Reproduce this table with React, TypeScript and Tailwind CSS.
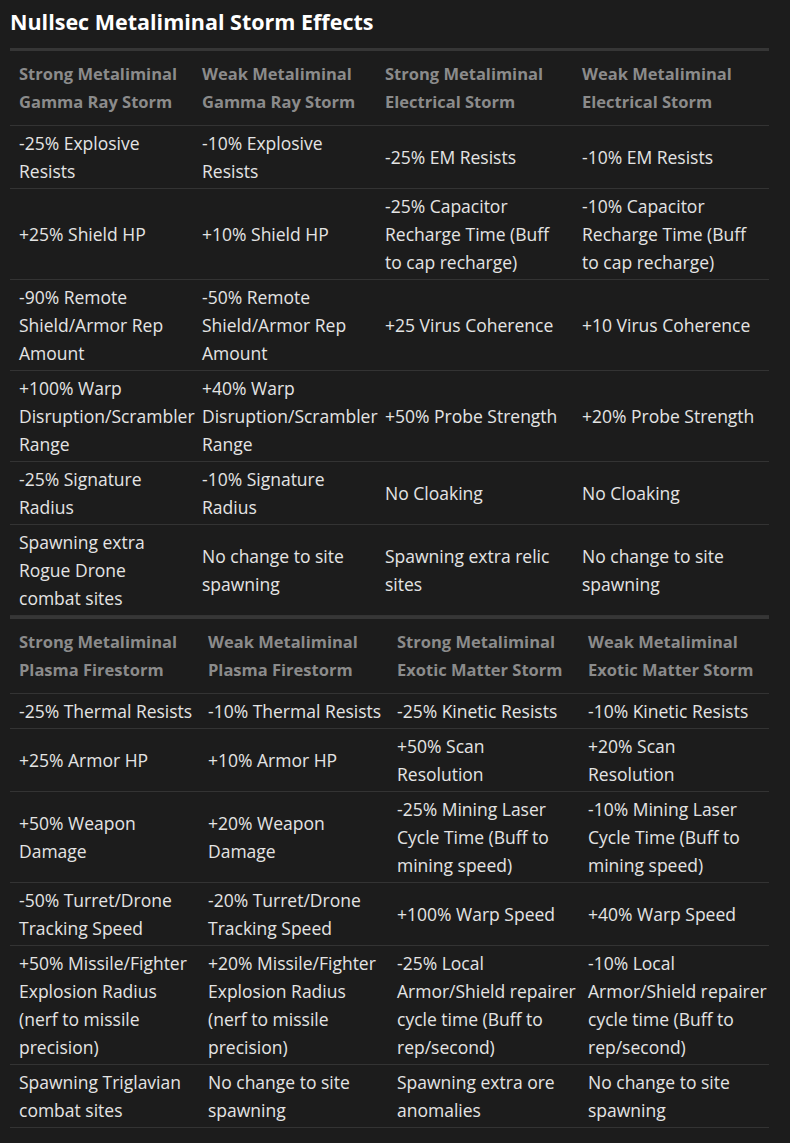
const tables = [
  {
    widths: [183, 183, 197, 196],
    heads: [
      "Strong Metaliminal Gamma Ray Storm",
      "Weak Metaliminal Gamma Ray Storm",
      "Strong Metaliminal Electrical Storm",
      "Weak Metaliminal Electrical Storm",
    ],
    rows: [
      ["-25% Explosive Resists", "-10% Explosive Resists", "-25% EM Resists", "-10% EM Resists"],
      [
        "+25% Shield HP",
        "+10% Shield HP",
        "-25% Capacitor Recharge Time (Buff\nto cap recharge)",
        "-10% Capacitor Recharge Time (Buff to cap recharge)",
      ],
      [
        "-90% Remote Shield/Armor Rep Amount",
        "-50% Remote Shield/Armor Rep Amount",
        "+25 Virus Coherence",
        "+10 Virus Coherence",
      ],
      [
        "+100% Warp Disruption/Scrambler Range",
        "+40% Warp Disruption/Scrambler Range",
        "+50% Probe Strength",
        "+20% Probe Strength",
      ],
      ["-25% Signature Radius", "-10% Signature Radius", "No Cloaking", "No Cloaking"],
      [
        "Spawning extra Rogue Drone combat sites",
        "No change to site spawning",
        "Spawning extra relic sites",
        "No change to site spawning",
      ],
    ],
  },
  {
    widths: [189, 189, 191, 190],
    heads: [
      "Strong Metaliminal Plasma Firestorm",
      "Weak Metaliminal Plasma Firestorm",
      "Strong Metaliminal Exotic Matter Storm",
      "Weak Metaliminal Exotic Matter Storm",
    ],
    rows: [
      ["-25% Thermal Resists", "-10% Thermal Resists", "-25% Kinetic Resists", "-10% Kinetic Resists"],
      ["+25% Armor HP", "+10% Armor HP", "+50% Scan\nResolution", "+20% Scan\nResolution"],
      [
        "+50% Weapon Damage",
        "+20% Weapon Damage",
        "-25% Mining Laser Cycle Time (Buff to mining speed)",
        "-10% Mining Laser Cycle Time (Buff to mining speed)",
      ],
      [
        "-50% Turret/Drone Tracking Speed",
        "-20% Turret/Drone Tracking Speed",
        "+100% Warp Speed",
        "+40% Warp Speed",
      ],
      [
        "+50% Missile/Fighter Explosion Radius (nerf to missile precision)",
        "+20% Missile/Fighter Explosion Radius (nerf to missile precision)",
        "-25% Local Armor/Shield repairer cycle time (Buff to rep/second)",
        "-10% Local Armor/Shield repairer cycle time (Buff to rep/second)",
      ],
      [
        "Spawning Triglavian combat sites",
        "No change to site spawning",
        "Spawning extra ore anomalies",
        "No change to site spawning",
      ],
    ],
  },
];

function StormTable({ t }: { t: (typeof tables)[number] }) {
  return (
    <table className="w-[759px] table-fixed border-collapse">
      <colgroup>
        {t.widths.map((w, i) => (
          <col key={i} style={{ width: w }} />
        ))}
      </colgroup>
      <thead>
        <tr className="border-t-[3px] border-b border-t-[#363636] border-b-[#333333]">
          {t.heads.map((h) => (
            <th
              key={h}
              className="pl-[9px] pr-[2px] py-[9px] text-left align-middle text-[16.5px] font-bold text-[#8b8b8b] leading-[28px]"
            >
              {h}
            </th>
          ))}
        </tr>
      </thead>
      <tbody>
        {t.rows.map((r, i) => (
          <tr key={i} className="border-b border-[#333333]">
            {r.map((c, j) => (
              <td
                key={j}
                className="whitespace-pre-line pl-[9px] pr-[2px] py-[3px] align-middle leading-[28px] text-[#e4e4e4]"
              >
                {c}
              </td>
            ))}
          </tr>
        ))}
      </tbody>
    </table>
  );
}

export default function App() {
  return (
    <div
      className="min-h-[1143px] w-[790px] bg-[#1c1c1c] pl-[10px] text-[17.5px]"
      style={{ fontFamily: "'Open Sans', Lato, sans-serif" }}
    >
      <h2 className="pt-[8px] pb-[13px] text-[21.5px] font-bold leading-[27px] text-white">
        Nullsec Metaliminal Storm Effects
      </h2>
      <StormTable t={tables[0]} />
      <StormTable t={tables[1]} />
    </div>
  );
}
